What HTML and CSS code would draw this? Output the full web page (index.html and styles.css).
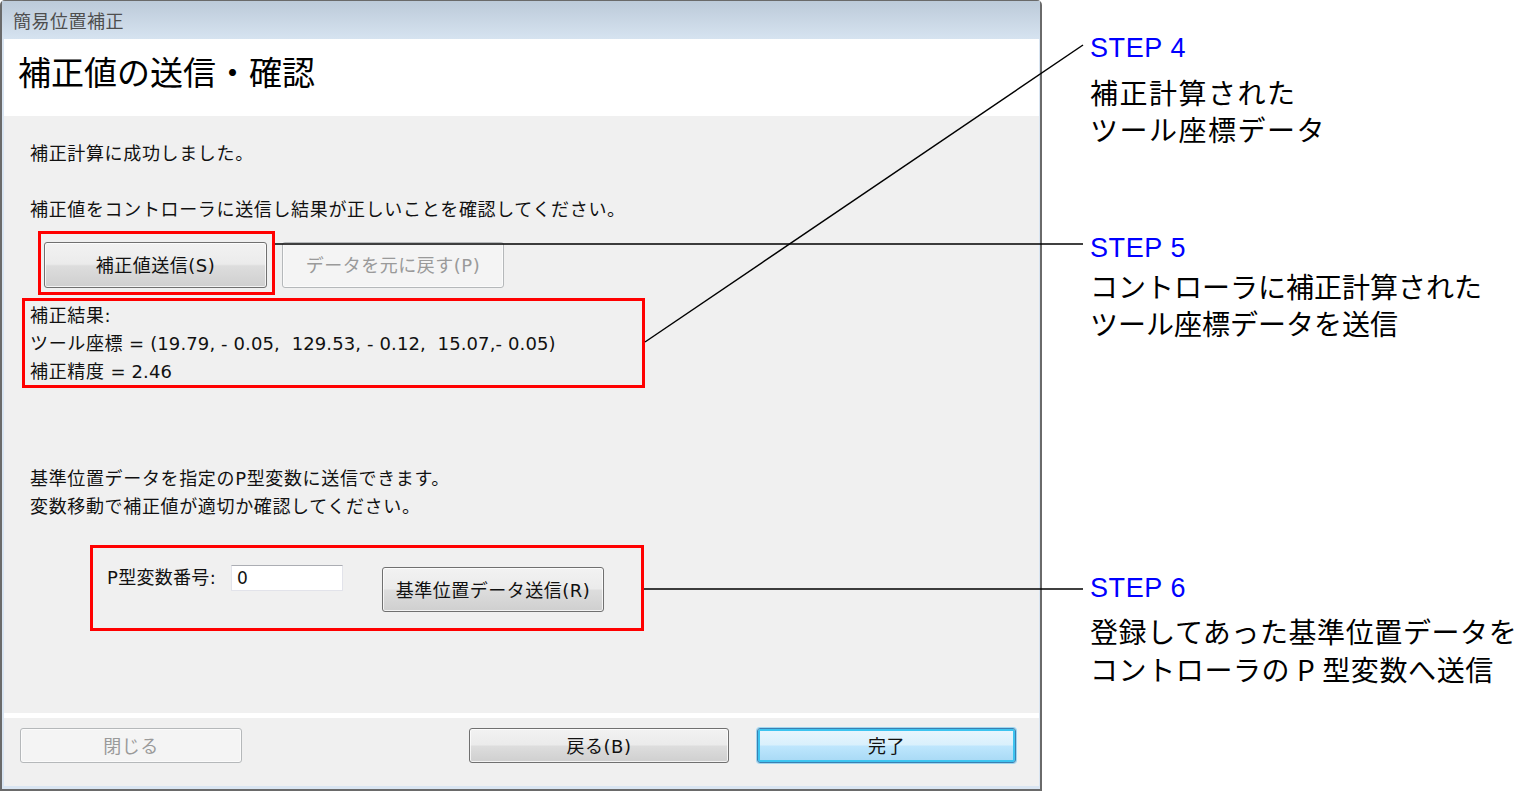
FILE: index.html
```html
<!DOCTYPE html>
<html lang="ja">
<head>
<meta charset="utf-8">
<title>補正値の送信・確認</title>
<link rel="stylesheet" href="styles.css">
</head>
<body>
<div class="page">
  <div class="window">
    <div class="titlebar">簡易位置補正</div>
    <div class="header">補正値の送信・確認</div>
    <div class="content">
      <p class="line first">補正計算に成功しました。</p>
      <p class="line gap">補正値をコントローラに送信し結果が正しいことを確認してください。</p>
      <div class="send-row">
        <div class="mark mark-send">
          <button class="btn btn-send">補正値送信(S)</button>
        </div>
        <button class="btn btn-disabled btn-revert">データを元に戻す(P)</button>
      </div>
      <div class="mark mark-result">
        <p class="line">補正結果:</p>
        <p class="line">ツール座標<span class="num"> = (19.79, - 0.05,  129.53, - 0.12,  15.07,- 0.05)</span></p>
        <p class="line">補正精度<span class="num"> = 2.46</span></p>
      </div>
      <div class="info">
        <p class="line">基準位置データを指定のP型変数に送信できます。</p>
        <p class="line">変数移動で補正値が適切か確認してください。</p>
      </div>
      <div class="mark mark-pvar">
        <span class="pvar-label">P型変数番号:</span>
        <span class="textbox">0</span>
        <button class="btn btn-base">基準位置データ送信(R)</button>
      </div>
    </div>
    <div class="separator"></div>
    <div class="footer">
      <button class="btn btn-disabled btn-close">閉じる</button>
      <div class="spacer"></div>
      <button class="btn btn-back">戻る(B)</button>
      <button class="btn btn-default">完了</button>
    </div>
  </div>

  <div class="notes">
    <div class="note note4">
      <div class="step">STEP 4</div>
      <div class="desc">補正計算された<br>ツール座標データ</div>
    </div>
    <div class="note note5">
      <div class="step">STEP 5</div>
      <div class="desc">コントローラに補正計算された<br>ツール座標データを送信</div>
    </div>
    <div class="note note6">
      <div class="step">STEP 6</div>
      <div class="desc">登録してあった基準位置データを<br>コントローラの P 型変数へ送信</div>
    </div>
  </div>

  <svg class="connectors" width="1522" height="791" viewBox="0 0 1522 791">
    <line x1="645" y1="342" x2="1083" y2="45" />
    <line x1="275" y1="244" x2="1083" y2="244" />
    <line x1="644" y1="589" x2="1083" y2="589" />
  </svg>
</div>
</body>
</html>
```

FILE: styles.css
```css
* { box-sizing: border-box; }

html, body {
  margin: 0;
  padding: 0;
  background: #ffffff;
}

body {
  font-family: "Noto Sans CJK JP", "Noto Sans", sans-serif;
  color: #111;
}

.page {
  position: relative;
  width: 1522px;
  height: 791px;
  display: flex;
  align-items: flex-start;
  overflow: hidden;
}

/* ---------- dialog window ---------- */
.window {
  width: 1042px;
  height: 791px;
  flex: none;
  display: flex;
  flex-direction: column;
  border: 2px solid #6a6a6a;
  border-top-width: 1px;
  border-bottom-width: 2px;
  border-radius: 5px 5px 0 0;
  padding: 0 1px 3px 2px;
  background: #d9e5f2;
  font-family: "DejaVu Sans", "Noto Sans CJK JP", sans-serif;
}

.titlebar {
  height: 38px;
  margin: 0 -1px 0 -2px;
  padding-left: 11px;
  font-family: "Noto Sans CJK JP", sans-serif;
  font-size: 18px;
  letter-spacing: 0.5px;
  line-height: 38px;
  color: #4e4e4e;
  background: linear-gradient(#bccad9, #d6e3f0);
}

.header {
  height: 77px;
  background: #ffffff;
  padding: 10px 0 0 14px;
  font-family: "Noto Sans CJK JP", sans-serif;
  font-size: 33px;
  line-height: 44px;
  color: #000;
}

.content {
  flex: 1;
  background: #f0f0f0;
  padding: 24px 0 0 26px;
  font-size: 18px;
}

.line {
  margin: 0;
  font-size: 18px;
  line-height: 28px;
  letter-spacing: 0.65px;
  white-space: nowrap;
}

.num {
  white-space: pre;
  letter-spacing: 0.12px;
}

.gap { margin-top: 28px; }

.mark {
  border: 3px solid #ff0000;
}

.send-row {
  display: flex;
  align-items: flex-start;
  margin: 7px 0 0 8px;
}

.mark-send {
  padding: 8px 5px 4px 3px;
}

.btn-send {
  width: 223px;
  height: 46px;
}

.btn-revert {
  width: 222px;
  height: 46px;
  margin: 11px 0 0 7px;
}

.mark-result {
  margin: 3px 0 0 -8px;
  width: 623px;
  height: 90px;
  padding: 1px 0 0 5px;
}

.info {
  margin-top: 77px;
}

.mark-pvar {
  margin: 24px 0 0 60px;
  width: 554px;
  height: 86px;
  display: flex;
  align-items: flex-start;
  padding: 16px 0 0 14px;
}

.pvar-label {
  width: 124px;
  font-size: 18px;
  line-height: 28px;
  letter-spacing: 0.3px;
  white-space: nowrap;
}

.textbox {
  width: 112px;
  height: 26px;
  margin-top: 1px;
  background: #ffffff;
  border: 1px solid #e2e3ea;
  border-top-color: #abadb3;
  padding-left: 5px;
  font-size: 17px;
  line-height: 25px;
}

.btn-base {
  width: 222px;
  height: 45px;
  margin: 3px 0 0 39px;
}

.separator {
  height: 5px;
  background: #ffffff;
}

.footer {
  height: 68px;
  background: #f0f0f0;
  display: flex;
  align-items: flex-start;
  padding: 10px 23px 0 16px;
}

.spacer { flex: 1; }

.btn-close { width: 222px; height: 35px; }
.btn-back { width: 260px; height: 35px; }
.btn-default { width: 259px; height: 35px; margin-left: 28px; }

/* ---------- buttons ---------- */
.btn {
  display: flex;
  align-items: center;
  justify-content: center;
  padding: 0 0 2px;
  font-family: "DejaVu Sans", "Noto Sans CJK JP", sans-serif;
  font-size: 18px;
  letter-spacing: 0.5px;
  color: #111;
  border: 1px solid #707070;
  border-radius: 3px;
  background: linear-gradient(#f2f2f2 0%, #ebebeb 48%, #dddddd 52%, #cfcfcf 100%);
  box-shadow: inset 0 0 0 1px rgba(255,255,255,0.75);
}

.btn-disabled {
  color: #9a9a9a;
  border-color: #b5b8ba;
  background: #f4f4f4;
  box-shadow: inset 0 0 0 1px #fbfbfb;
}

.btn-default {
  border-color: #3c7fb1;
  background: linear-gradient(#eaf6fd 0%, #d9f0fc 48%, #bee6fd 52%, #a7d9f5 100%);
  box-shadow: inset 0 0 0 2px #3dc4f0, 0 0 0 1px #9fd7f0;
}

/* ---------- annotations ---------- */
.notes {
  margin-left: 48px;
  display: flex;
  flex-direction: column;
  padding-top: 32px;
}

.step {
  font-family: "Liberation Sans", Arial, sans-serif;
  font-size: 27px;
  line-height: 32px;
  letter-spacing: 0.6px;
  color: #0000ff;
}

.desc {
  font-family: "Noto Sans CJK JP", "Noto Sans", sans-serif;
  font-size: 28px;
  line-height: 37px;
  color: #000;
  white-space: nowrap;
}

.note4 .desc { margin-top: 10px; letter-spacing: 1.5px; }
.note5 { margin-top: 84px; }
.note5 .desc { margin-top: 4px; }
.note6 { margin-top: 230px; }
.note6 .desc { margin-top: 8px; line-height: 38px; letter-spacing: 0.6px; }

/* ---------- connector lines ---------- */
.connectors {
  position: absolute;
  left: 0;
  top: 0;
  pointer-events: none;
}

.connectors line {
  stroke: #000;
  stroke-width: 1.5;
}
```
